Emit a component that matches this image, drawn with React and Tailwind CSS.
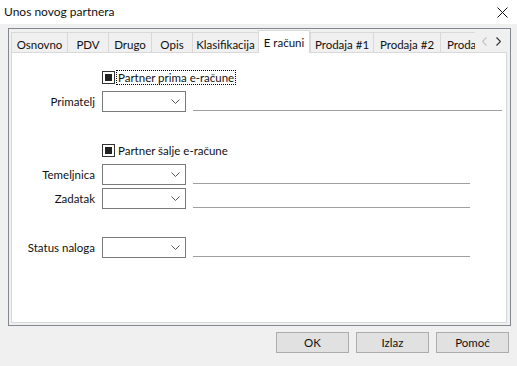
import React from 'react';

const tabs = [
    { label: 'Osnovno', w: 'w-[56px]' },
    { label: 'PDV', w: 'w-[41px]' },
    { label: 'Drugo', w: 'w-[43px]' },
    { label: 'Opis', w: 'w-[41px]' },
    { label: 'Klasifikacija', w: 'w-[66px]' },
    { label: 'E računi', w: 'w-[52px]', active: true },
    { label: 'Prodaja #1', w: 'w-[63px]' },
    { label: 'Prodaja #2', w: 'w-[67px]' },
    { label: 'Prodaja #3', w: 'w-[67px]' },
];

function Chevron() {
    return (
        <svg width="9" height="5" viewBox="0 0 9 5">
            <path d="M0.5 0.5 L4.5 4.5 L8.5 0.5" fill="none" stroke="#555" strokeWidth="1" />
        </svg>
    );
}

function Combo() {
    return (
        <div className="w-[84px] h-[21px] border border-[#7a7a7a] bg-white flex items-center justify-end pr-[5px] shrink-0">
            <Chevron />
        </div>
    );
}

function Checkbox({ label, focused }) {
    return (
        <div className="flex items-center h-[15px]">
            <div className="w-[13px] h-[13px] border border-[#333] bg-white flex items-center justify-center">
                <div className="w-[7px] h-[7px] bg-[#222]"></div>
            </div>
            <span className={`ml-[2px] px-[1px] leading-[13px] text-[11.5px] ${focused ? 'outline outline-1 outline-dotted outline-black' : ''}`}>
                {label}
            </span>
        </div>
    );
}

function Field({ label, lineW }) {
    return (
        <div className="flex items-end h-[21px]">
            <div className="w-[84px] text-right pr-[7px] self-center">{label}</div>
            <Combo />
            <div className={`ml-[7px] ${lineW} h-[1px] bg-[#a0a0a0] mb-[1px]`}></div>
        </div>
    );
}

export default function App() {
    return (
        <div className="w-[517px] h-[366px] bg-[#f0f0f0] text-[11.5px] text-[#111] flex flex-col" style={{ fontFamily: 'Lato, "Noto Sans", sans-serif' }}>
            {/* Title bar */}
            <div className="h-[24px] bg-white flex items-center justify-between pl-[4px] pr-[9px] shrink-0">
                <span className="text-[12px]">Unos novog partnera</span>
                <svg width="11" height="11" viewBox="0 0 11 11">
                    <path d="M0.5 0.5 L10.5 10.5 M10.5 0.5 L0.5 10.5" stroke="#111" strokeWidth="1" />
                </svg>
            </div>

            {/* Tab frame */}
            <div className="mt-[4px] ml-[8px] w-[503px] h-[298px] border border-[#828790] pl-[2px] pr-[3px] pt-[1px] pb-[2px] flex flex-col">
                <div className="relative h-[22px] flex items-end shrink-0">
                    {tabs.map((t, i) => (
                        <div
                            key={i}
                            className={`${t.w} shrink-0 flex justify-center border-t border-l border-[#d9d9d9] whitespace-nowrap overflow-hidden ${
                                t.active
                                    ? 'h-[23px] -mb-[1px] bg-white z-10 border-r pt-[3px]'
                                    : 'h-[20px] bg-[#f0f0f0] pt-[3px]'
                            }`}
                        >
                            {t.label}
                        </div>
                    ))}
                    <div className="absolute right-0 top-0 h-[22px] w-[32px] bg-[#f0f0f0] flex items-center justify-center gap-[9px] z-20">
                        <svg width="5" height="9" viewBox="0 0 5 9">
                            <path d="M4.5 0.5 L0.5 4.5 L4.5 8.5" fill="none" stroke="#c4c4c4" strokeWidth="1.2" />
                        </svg>
                        <svg width="5" height="9" viewBox="0 0 5 9">
                            <path d="M0.5 0.5 L4.5 4.5 L0.5 8.5" fill="none" stroke="#333" strokeWidth="1.2" />
                        </svg>
                    </div>
                </div>

                {/* Panel */}
                <div className="flex-1 border border-[#d9d9d9] bg-white pl-[6px] pt-[17px]">
                    <div className="pl-[84px]">
                        <Checkbox label="Partner prima e-račune" focused />
                    </div>
                    <div className="mt-[6px]">
                        <Field label="Primatelj" lineW="w-[309px]" />
                    </div>

                    <div className="mt-[31px] pl-[84px]">
                        <Checkbox label="Partner šalje e-račune" />
                    </div>
                    <div className="mt-[6px] flex flex-col gap-[3px]">
                        <Field label="Temeljnica" lineW="w-[277px]" />
                        <Field label="Zadatak" lineW="w-[277px]" />
                    </div>
                    <div className="mt-[28px]">
                        <Field label="Status naloga" lineW="w-[277px]" />
                    </div>
                </div>
            </div>

            {/* Buttons */}
            <div className="flex justify-end gap-[7px] pr-[8px] mt-[6px]">
                {['OK', 'Izlaz', 'Pomoć'].map((b) => (
                    <div key={b} className="w-[73px] h-[21px] bg-[#e1e1e1] border border-[#adadad] flex items-center justify-center">
                        {b}
                    </div>
                ))}
            </div>
        </div>
    );
}
